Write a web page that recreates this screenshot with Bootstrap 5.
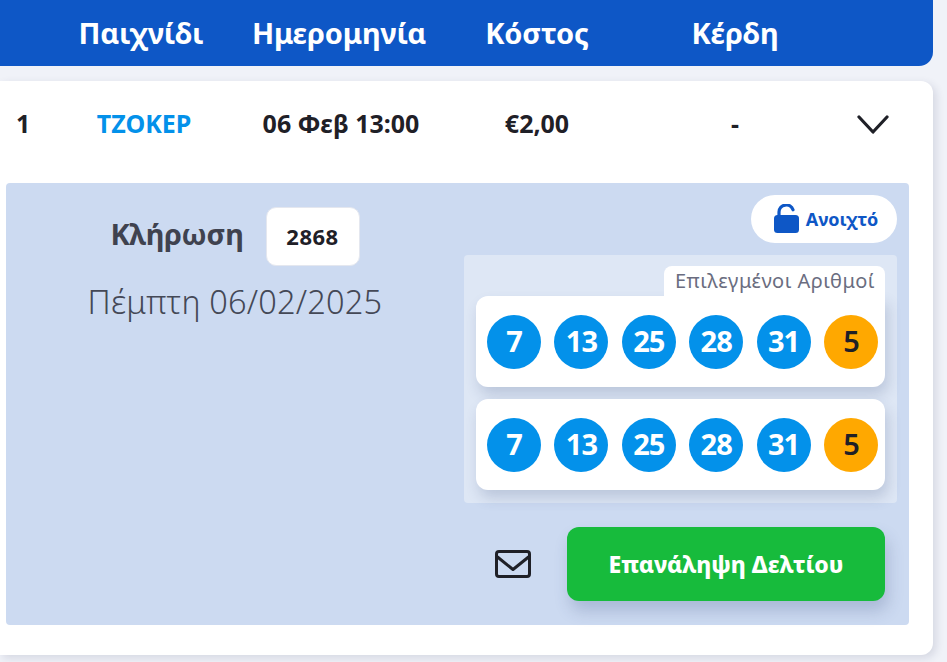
<!DOCTYPE html>
<html lang="el">

<head>
    <meta charset="UTF-8">
    <meta name="viewport" content="width=device-width, initial-scale=1.0">
    <title>Δελτία</title>
    <link rel="stylesheet" href="https://cdn.jsdelivr.net/npm/bootstrap@5.3.0/dist/css/bootstrap.min.css">
    <style>
        html, body { height: 662px; overflow: hidden; }
        body { background: #f0f2f8; font-family: "Noto Sans", "Open Sans", sans-serif; color: #1f2027; }
        .cols { display: grid; grid-template-columns: 42px 198px 198px 198px 198px 1fr; align-items: center; text-align: center; }
        .head-bar { background: #0e57c6; color: #fff; height: 66px; margin-right: 14px; border-radius: 0 0 14px 0; font-size: 29px; font-weight: 700; letter-spacing: -.2px; }
        .sheet { background: #fff; margin: 15px 14px 0 0; height: 574px; border-radius: 0 12px 12px 0; box-shadow: 3px 3px 8px rgba(40, 50, 90, .14); }
        .game-row { height: 86px; font-size: 25px; font-weight: 700; }
        .game-name { color: #0391ea; padding-left: 6px; }
        .first-cell { text-align: left; padding-left: 16px; }
        .chevron-cell { padding-right: 22px; }
        .panel { background: #ccdaf1; margin: 16px 24px 0 6px; height: 442px; border-radius: 4px; padding: 12px 12px 0 0; }
        .draw-side { width: 458px; flex: none; }
        .draw-head { margin-top: 12px; gap: 22px; }
        .draw-label { font-size: 29px; font-weight: 700; color: #3f424f; letter-spacing: -.3px; margin-bottom: 5px; }
        .draw-num { width: 94px; height: 59px; background: #fff; border: 1px solid #e4e7ef; border-radius: 10px; font-size: 22px; font-weight: 700; letter-spacing: .5px; }
        .draw-date { font-size: 32.5px; font-weight: 300; color: #444856; margin-top: 12px; letter-spacing: .2px; }
        .lock-pill { width: 146px; height: 48px; background: #fff; border-radius: 24px; color: #0e57c6; font-size: 18px; font-weight: 700; gap: 5px; padding-left: 3px; }
        .numbers-box { background: #dee7f5; border-radius: 4px; padding: 11px 12px 13px; margin-top: 12px; }
        .tab-label { width: 221px; height: 30px; background: #fff; border-radius: 8px 8px 0 0; color: #6a6d80; font-size: 20px; padding-left: 11px; line-height: 30px; white-space: nowrap; letter-spacing: .5px; }
        .ticket { height: 91px; background: #fff; border-radius: 12px; box-shadow: 3px 8px 14px rgba(50, 70, 120, .2); padding: 0 7px 0 11px; }
        .ticket + .ticket { margin-top: 12px; }
        .first-ticket { border-top-right-radius: 0; }
        .ball { width: 54px; height: 54px; border-radius: 50%; background: #0391ea; color: #fff; font-size: 29px; font-weight: 700; letter-spacing: -1px; padding-bottom: 1px; }
        .ball-joker { background: #ffa800; color: #1f2027; font-weight: 600; }
        .actions { margin-top: 24px; padding-right: 12px; }
        .mail-link { width: 36px; margin-right: 36px; line-height: 0; }
        .repeat-btn { width: 318px; height: 74px; background: #17bb3c; color: #fff; border: 0; border-radius: 12px; font-size: 23px; font-weight: 800; box-shadow: 3px 10px 16px rgba(50, 70, 120, .22); white-space: nowrap; }
        .repeat-btn:hover { background: #17bb3c; color: #fff; }
    </style>
</head>

<body>
    <div class="head-bar cols">
        <div></div>
        <div>Παιχνίδι</div>
        <div>Ημερομηνία</div>
        <div>Κόστος</div>
        <div>Κέρδη</div>
        <div></div>
    </div>

    <div class="sheet">
        <div class="game-row cols">
            <div class="first-cell">1</div>
            <div class="game-name">ΤΖΟΚΕΡ</div>
            <div class="ps-1">06 Φεβ 13:00</div>
            <div>€2,00</div>
            <div>-</div>
            <div class="chevron-cell d-flex justify-content-center">
                <svg width="32" height="19" viewBox="0 0 32 19" fill="none" stroke="#1f2027" stroke-width="3.2" stroke-linecap="round" stroke-linejoin="round"><path d="M2 2l14 15L30 2"/></svg>
            </div>
        </div>

        <div class="panel d-flex">
            <div class="draw-side text-center">
                <div class="draw-head d-flex justify-content-center align-items-center">
                    <span class="draw-label">Κλήρωση</span>
                    <span class="draw-num d-flex align-items-center justify-content-center">2868</span>
                </div>
                <div class="draw-date">Πέμπτη 06/02/2025</div>
            </div>

            <div class="flex-grow-1">
                <div class="d-flex justify-content-end">
                    <div class="lock-pill d-flex align-items-center justify-content-center">
                        <svg width="28" height="30" viewBox="0 0 28 30" fill="#0e57c6"><rect x="1" y="11" width="25" height="18" rx="3.5"/><path d="M6 12V8a7.2 7.2 0 0 1 14-2.2" fill="none" stroke="#0e57c6" stroke-width="3.2" stroke-linecap="round"/></svg>
                        <span>Ανοιχτό</span>
                    </div>
                </div>

                <div class="numbers-box">
                    <div class="d-flex justify-content-end"><div class="tab-label">Επιλεγμένοι Αριθμοί</div></div>
                    <div class="ticket first-ticket d-flex align-items-center justify-content-between">
                        <span class="ball d-flex align-items-center justify-content-center">7</span>
                        <span class="ball d-flex align-items-center justify-content-center">13</span>
                        <span class="ball d-flex align-items-center justify-content-center">25</span>
                        <span class="ball d-flex align-items-center justify-content-center">28</span>
                        <span class="ball d-flex align-items-center justify-content-center">31</span>
                        <span class="ball ball-joker d-flex align-items-center justify-content-center">5</span>
                    </div>
                    <div class="ticket d-flex align-items-center justify-content-between">
                        <span class="ball d-flex align-items-center justify-content-center">7</span>
                        <span class="ball d-flex align-items-center justify-content-center">13</span>
                        <span class="ball d-flex align-items-center justify-content-center">25</span>
                        <span class="ball d-flex align-items-center justify-content-center">28</span>
                        <span class="ball d-flex align-items-center justify-content-center">31</span>
                        <span class="ball ball-joker d-flex align-items-center justify-content-center">5</span>
                    </div>
                </div>

                <div class="actions d-flex justify-content-end align-items-center">
                    <span class="mail-link">
                        <svg width="36" height="28" viewBox="0 0 36 28" fill="none" stroke="#1f2027" stroke-width="3" stroke-linejoin="round" stroke-linecap="round"><rect x="1.5" y="1.5" width="33" height="25" rx="2.5"/><path d="M2.5 7L18 19.5 33.5 7"/></svg>
                    </span>
                    <button type="button" class="btn repeat-btn">Επανάληψη Δελτίου</button>
                </div>
            </div>
        </div>
    </div>

    <script src="https://cdn.jsdelivr.net/npm/bootstrap@5.3.0/dist/js/bootstrap.bundle.min.js"></script>
</body>

</html>
